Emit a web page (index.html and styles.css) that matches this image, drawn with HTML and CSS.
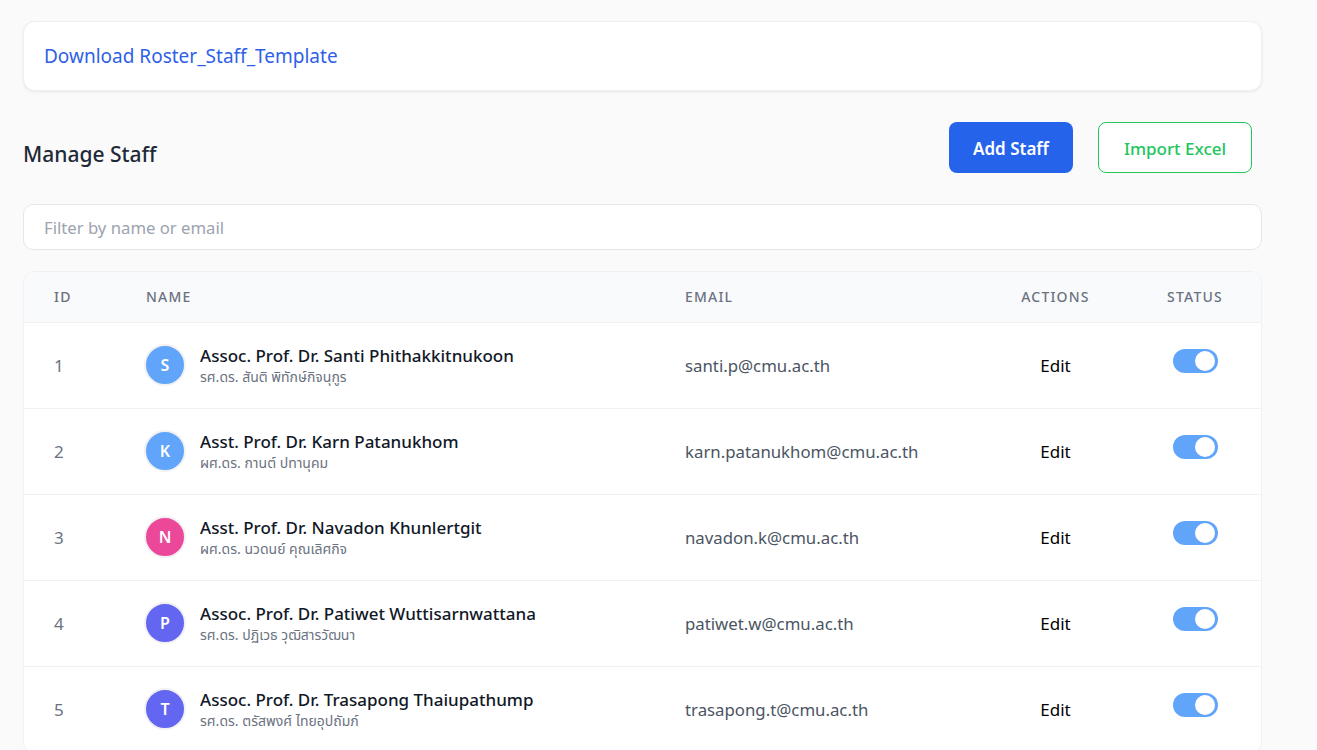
FILE: index.html
```html
<!DOCTYPE html>
<html lang="en">
<head>
<meta charset="utf-8">
<title>Manage Staff</title>
<link rel="stylesheet" href="styles.css">
</head>
<body>
<div class="page">
  <div class="card download-card">
    <a class="download-link" href="#">Download Roster_Staff_Template</a>
  </div>

  <div class="toolbar">
    <h2 class="title">Manage Staff</h2>
    <div class="actions">
      <button class="btn btn-primary">Add Staff</button>
      <button class="btn btn-outline">Import Excel</button>
    </div>
  </div>

  <input class="filter" type="text" placeholder="Filter by name or email">

  <div class="table-wrap">
    <table class="staff">
      <thead>
        <tr>
          <th class="c-id">ID</th>
          <th class="c-name">Name</th>
          <th class="c-email">Email</th>
          <th class="c-act">Actions</th>
          <th class="c-status">Status</th>
        </tr>
      </thead>
      <tbody>
        <tr>
          <td class="c-id">1</td>
          <td class="c-name"><div class="person"><span class="avatar blue">S</span><div><div class="en">Assoc. Prof. Dr. Santi Phithakkitnukoon</div><div class="th">รศ.ดร. สันติ พิทักษ์กิจนุกูร</div></div></div></td>
          <td class="c-email">santi.p@cmu.ac.th</td>
          <td class="c-act"><span class="edit">Edit</span></td>
          <td class="c-status"><span class="toggle"><span class="knob"></span></span></td>
        </tr>
        <tr>
          <td class="c-id">2</td>
          <td class="c-name"><div class="person"><span class="avatar blue">K</span><div><div class="en">Asst. Prof. Dr. Karn Patanukhom</div><div class="th">ผศ.ดร. กานต์ ปทานุคม</div></div></div></td>
          <td class="c-email">karn.patanukhom@cmu.ac.th</td>
          <td class="c-act"><span class="edit">Edit</span></td>
          <td class="c-status"><span class="toggle"><span class="knob"></span></span></td>
        </tr>
        <tr>
          <td class="c-id">3</td>
          <td class="c-name"><div class="person"><span class="avatar pink">N</span><div><div class="en">Asst. Prof. Dr. Navadon Khunlertgit</div><div class="th">ผศ.ดร. นวดนย์ คุณเลิศกิจ</div></div></div></td>
          <td class="c-email">navadon.k@cmu.ac.th</td>
          <td class="c-act"><span class="edit">Edit</span></td>
          <td class="c-status"><span class="toggle"><span class="knob"></span></span></td>
        </tr>
        <tr>
          <td class="c-id">4</td>
          <td class="c-name"><div class="person"><span class="avatar indigo">P</span><div><div class="en">Assoc. Prof. Dr. Patiwet Wuttisarnwattana</div><div class="th">รศ.ดร. ปฏิเวธ วุฒิสารวัฒนา</div></div></div></td>
          <td class="c-email">patiwet.w@cmu.ac.th</td>
          <td class="c-act"><span class="edit">Edit</span></td>
          <td class="c-status"><span class="toggle"><span class="knob"></span></span></td>
        </tr>
        <tr>
          <td class="c-id">5</td>
          <td class="c-name"><div class="person"><span class="avatar indigo">T</span><div><div class="en">Assoc. Prof. Dr. Trasapong Thaiupathump</div><div class="th">รศ.ดร. ตรัสพงศ์ ไทยอุปถัมภ์</div></div></div></td>
          <td class="c-email">trasapong.t@cmu.ac.th</td>
          <td class="c-act"><span class="edit">Edit</span></td>
          <td class="c-status"><span class="toggle"><span class="knob"></span></span></td>
        </tr>
      </tbody>
    </table>
  </div>
</div>
</body>
</html>
```
FILE: styles.css
```css
* { box-sizing: border-box; }
html, body { margin: 0; padding: 0; }
body {
  background: #fafafa;
  font-family: "Noto Sans", "Noto Sans Thai", "Noto Sans CJK SC", sans-serif;
  color: #111827;
  overflow: hidden;
}
.page {
  width: 1239px;
  margin-left: 23px;
  padding-top: 21px;
}
.card {
  background: #fff;
  border-radius: 12px;
  box-shadow: 0 1px 3px rgba(0,0,0,0.08);
  border: 1px solid #f0f0f0;
}
.download-card {
  height: 70px;
  display: flex;
  align-items: center;
  padding: 0 20px;
}
.download-link {
  color: #2f5fe6;
  font-size: 19px;
  text-decoration: none;
}
.toolbar {
  display: flex;
  align-items: center;
  justify-content: space-between;
  margin-top: 31px;
  height: 51px;
}
.title {
  margin: 0;
  font-size: 21px;
  font-weight: 500;
  color: #1f2937;
  padding-top: 13px;
}
.actions {
  display: flex;
  gap: 25px;
  margin-right: 10px;
}
.btn {
  font-family: inherit;
  height: 51px;
  border-radius: 8px;
  font-size: 17px;
  font-weight: 600;
  cursor: pointer;
  padding-top: 2px;
}
.btn-primary {
  width: 124px;
  background: #2563eb;
  color: #fff;
  border: none;
}
.btn-outline {
  width: 154px;
  background: #fff;
  color: #22c55e;
  border: 1px solid #22c55e;
  font-weight: 500;
}
.filter {
  display: block;
  margin-top: 31px;
  width: 100%;
  height: 46px;
  border: 1px solid #e5e7eb;
  border-radius: 10px;
  background: #fff;
  padding: 0 20px;
  font-family: inherit;
  font-size: 16.7px;
  outline: none;
}
.filter::placeholder { color: #9ca3af; }
.table-wrap {
  margin-top: 21px;
  background: #fff;
  border: 1px solid #f0f1f3;
  border-radius: 12px;
  overflow: hidden;
}
.staff {
  width: 100%;
  border-collapse: collapse;
}
.staff th {
  background: #f9fafb;
  height: 50px;
  font-size: 14px;
  font-weight: 500;
  letter-spacing: 1.2px;
  text-transform: uppercase;
  color: #6b7280;
  text-align: left;
  border-bottom: 1px solid #f0f1f3;
  padding-top: 0;
}
.staff td {
  height: 86px;
  border-bottom: 1px solid #f0f1f3;
  font-size: 17px;
}
.c-id { padding-left: 30px; width: 121px; }
td.c-id { color: #6b7280; }
.c-name { width: 539px; }
.c-email { width: 290px; }
td.c-email { color: #4b5563; font-size: 16.8px; }
.c-act { text-align: center !important; width: 163px; }
.c-status { text-align: center !important; padding-right: 9px; }
.person {
  display: flex;
  align-items: center;
  gap: 14px;
  margin-top: 0;
  margin-left: -2px;
}
.avatar {
  flex: none;
  width: 42px;
  height: 42px;
  border-radius: 50%;
  color: #fff;
  font-weight: 600;
  font-size: 16px;
  display: flex;
  align-items: center;
  justify-content: center;
  border: 2px solid #f1f1f3;
}
.avatar.blue { background: #60a5fa; }
.avatar.pink { background: #ec4899; }
.avatar.indigo { background: #6366f1; }
.en {
  font-size: 17px;
  font-weight: 500;
  color: #111827;
  line-height: 23px;
}
.th {
  font-size: 14px;
  color: #6b7280;
  line-height: 20px;
}
.edit {
  font-weight: 400;
  color: #000;
  font-size: 17px;
}
.toggle {
  display: inline-block;
  position: relative;
  width: 45px;
  height: 24px;
  border-radius: 12px;
  background: #60a5fa;
  vertical-align: middle;
  margin-top: -12px;
}
.knob {
  position: absolute;
  right: 3px;
  top: 2px;
  width: 20px;
  height: 20px;
  border-radius: 50%;
  background: #fff;
}
```
